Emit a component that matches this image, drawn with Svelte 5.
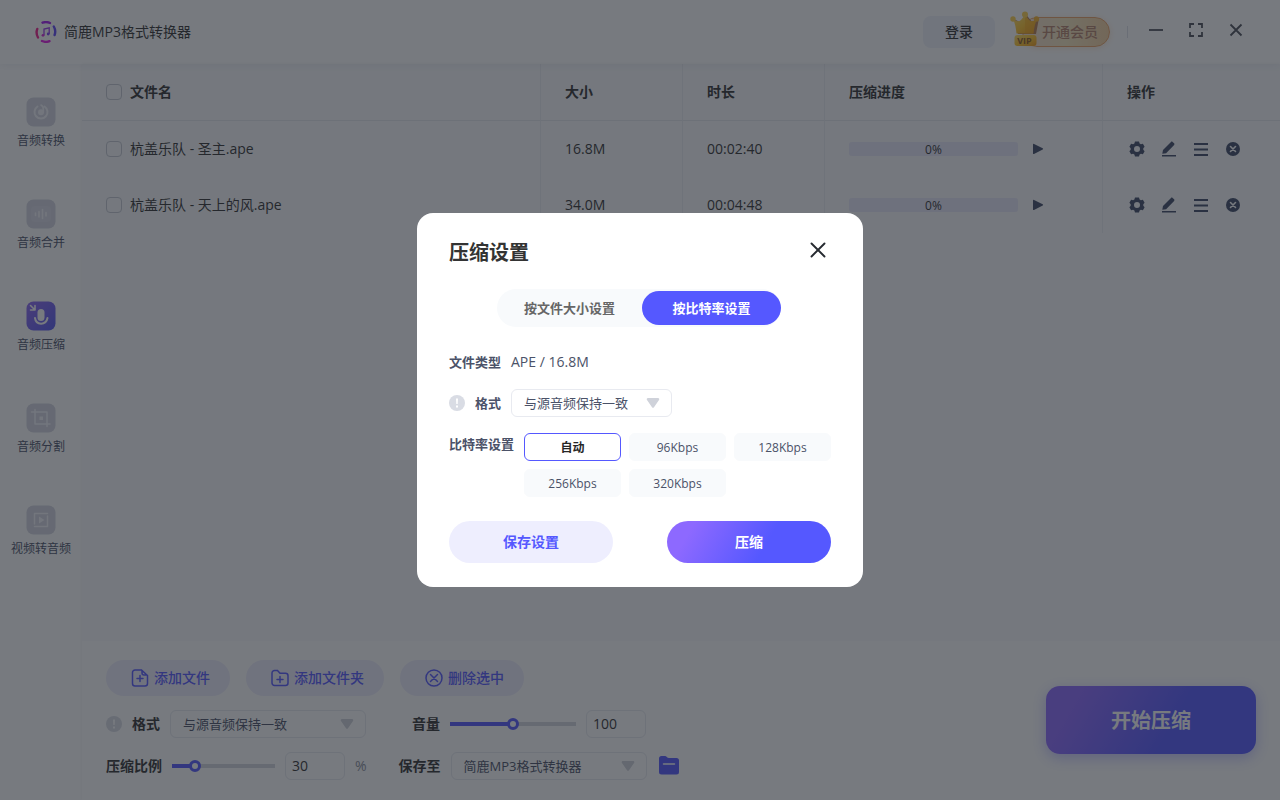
<script>
  const nav = [
    { id: 'convert', label: '音频转换' },
    { id: 'merge', label: '音频合并' },
    { id: 'compress', label: '音频压缩' },
    { id: 'split', label: '音频分割' },
    { id: 'video', label: '视频转音频' }
  ];
  const files = [
    { name: '杭盖乐队 - 圣主.ape', size: '16.8M', time: '00:02:40', progress: 0 },
    { name: '杭盖乐队 - 天上的风.ape', size: '34.0M', time: '00:04:48', progress: 0 }
  ];
  const rates = ['自动', '96Kbps', '128Kbps', '256Kbps', '320Kbps'];

  let active = $state('compress');
  let rate = $state('自动');
  let tab = $state('rate');
  let open = $state(true);
  let ratio = $state(19);
  let volume = $state(50);
</script>

{#snippet caret()}
  <svg class="caret" width="14" height="12" viewBox="0 0 14 12" aria-hidden="true"><path d="M2 1h10c1.200 0 1.700 1.100 1 2L8 10.300c-.5.700-1.500.700-2 0L1 3C.3 2.100.8 1 2 1z" /></svg>
{/snippet}

{#snippet info()}
  <svg class="info" width="16" height="16" viewBox="0 0 16 16" aria-hidden="true"><circle cx="8" cy="8" r="8" /><path d="M7 3.500h2l-.3 5.500H7.300zM7 10.500h2v2H7z" fill="#fff" /></svg>
{/snippet}

<div class="app">
  <header>
    <div class="brand">
      <svg width="22" height="22" viewBox="0 0 22 22" fill="none" aria-hidden="true">
        <g stroke-width="2.400" stroke-linecap="round">
          <path d="M7.500 1.700A10 10 0 0 1 15 2" stroke="#a51cf0" />
          <path d="M18.800 5.500a10 10 0 0 1 .8 8.500" stroke="#5f48f5" />
          <path d="M14.500 20.200a10 10 0 0 1-7.500-.2" stroke="#e01be0" />
          <path d="M3 16.500a10 10 0 0 1-.7-8.600" stroke="#f0208c" />
        </g>
        <path d="M9 14.200V8l5.200-1.200v6.100" stroke="#9a35e8" stroke-width="1.300" />
        <circle cx="8" cy="14.300" r="1.400" fill="#d425d8" /><circle cx="13.200" cy="13" r="1.400" fill="#7a42f0" />
      </svg>
      <span>简鹿MP3格式转换器</span>
    </div>
    <div class="tools">
      <button class="login">登录</button>
      <button class="vip">
        <svg width="32" height="38" viewBox="0 0 32 38" aria-hidden="true">
          <defs>
            <linearGradient id="gold" x1="0" y1="0" x2="1" y2="1"><stop offset="0" stop-color="#ffdf6b" /><stop offset=".5" stop-color="#ffc62e" /><stop offset="1" stop-color="#f29a13" /></linearGradient>
          </defs>
          <path d="M5 8.500 11 12 16.500 4 22 11l7-4-3 16H8z" fill="#b98050" />
          <path d="M3 8c3 2.500 6 3 8 1l4-5 4 5c2 2 5 1.500 8-1-2 4-3 9-3.500 14.500H6.500C6 17 5 12 3 8z" fill="url(#gold)" />
          <path d="M15 4l4 5c2 2 5 1.500 8-1-2 4-3 9-3.500 14.500H15z" fill="#f5a81c" opacity=".5" />
          <circle cx="3" cy="8" r="2.700" fill="#ffd24f" /><circle cx="15" cy="3.500" r="3" fill="#ffd24f" /><circle cx="26.500" cy="8" r="2.700" fill="#f8b42f" />
          <rect x="4.500" y="24" width="22" height="11" rx="3" fill="url(#gold)" />
          <text x="14.500" y="33" text-anchor="middle" class="viptext">VIP</text>
        </svg>
        <span>开通会员</span>
      </button>
      <i class="rule"></i>
      <div class="wins">
        <button aria-label="最小化"><svg width="16" height="16" viewBox="0 0 16 16"><path d="M1 8h14" /></svg></button>
        <button aria-label="全屏"><svg width="16" height="16" viewBox="0 0 16 16"><path d="M2 6V2h4M10 2h4v4M14 10v4h-4M6 14H2v-4" /></svg></button>
        <button aria-label="关闭"><svg width="16" height="16" viewBox="0 0 16 16"><path d="M2.500 2.500l11 11M13.500 2.500l-11 11" /></svg></button>
      </div>
    </div>
  </header>

  <div class="body">
    <nav>
      {#each nav as item}
        <button class:on={active === item.id} onclick={() => (active = item.id)}>
          <svg width="30" height="30" viewBox="0 0 30 30" fill="none" stroke-linecap="round" stroke-linejoin="round" aria-hidden="true">
            <defs><linearGradient id="violet" x1="0" y1="0" x2="1" y2="1"><stop offset="0" stop-color="#8f68f2" /><stop offset="1" stop-color="#5558ef" /></linearGradient></defs>
            <rect x=".5" y=".5" width="29" height="29" rx="7" fill={active === item.id ? 'url(#violet)' : '#d4d5e0'} />
            {#if item.id === 'convert'}
              <path d="M11.500 9.500a6.500 6.500 0 1 0 7 0" stroke="#f4f5fa" stroke-width="2" /><path d="M15 8c2 1 2.500 2.500 2.300 4.500v3" stroke="#f4f5fa" stroke-width="1.600" /><circle cx="15" cy="15.300" r="3" fill="#f4f5fa" />
            {:else if item.id === 'merge'}
              <rect x="5" y="7" width="20" height="16" rx="4" fill="#d9dae5" />
              <path d="M9.500 14v2.500M13 12.500v5.500M16.500 10.500v9M20 13.500v3.500" stroke="#f4f5fa" stroke-width="1.600" />
            {:else if item.id === 'compress'}
              <rect x="11.500" y="8" width="7" height="12" rx="3.500" fill="#fff" />
              <path d="M9 17c1 7.500 11 7.500 12.500 0" stroke="#fff" stroke-width="2" />
              <path d="M4.500 4.500l4 4M9 4.500v4.500H4.500" stroke="#fff" stroke-width="1.600" />
            {:else if item.id === 'split'}
              <path d="M5.500 9H21v14.500M9 6.500V21h15" stroke="#f4f5fa" stroke-width="1.500" /><rect x="13.500" y="13.500" width="3.500" height="3.500" fill="#f4f5fa" />
            {:else}
              <path d="M21.500 8.500H8.500V19M8.500 21.500h13V11" stroke="#f4f5fa" stroke-width="1.500" /><path d="M13 11.500l5.500 3.500-5.500 3.500z" fill="#f4f5fa" />
            {/if}
          </svg>
          <span>{item.label}</span>
        </button>
      {/each}
    </nav>

    <main>
      <div class="list">
        <table>
          <thead>
            <tr>
              <th><label><input type="checkbox" />文件名</label></th>
              <th class="c-size">大小</th>
              <th class="c-size">时长</th>
              <th class="c-prog">压缩进度</th>
              <th class="c-act">操作</th>
            </tr>
          </thead>
          <tbody>
            {#each files as f}
              <tr>
                <td><label><input type="checkbox" />{f.name}</label></td>
                <td>{f.size}</td>
                <td>{f.time}</td>
                <td>
                  <div class="prog">
                    <div class="bar"><div class="fill" style="width:{f.progress}%"></div><span>{f.progress}%</span></div>
                    <button aria-label="开始"><svg width="12" height="12" viewBox="0 0 12 12"><path d="M1 1.500c0-.6.500-.8 1-.6l8.700 4.400c.5.300.5 1 0 1.300L2 11c-.5.300-1 0-1-.5z" fill="#3f4a66" /></svg></button>
                  </div>
                </td>
                <td>
                  <div class="acts">
                    <button aria-label="设置"><svg width="16" height="16" viewBox="0 0 16 16"><path fill="#3f4a66" fill-rule="evenodd" d="M6 .5h4l.6 2 1.300.7 2-.5 1.700 3L14.300 7.200v1.600l1.300 1.500-1.700 3-2-.5-1.300.7-.6 2H6l-.6-2-1.300-.7-2 .5-1.700-3 1.300-1.500V7.200L.4 5.700l1.700-3 2 .5 1.300-.7zM8 5a3 3 0 1 0 0 6 3 3 0 0 0 0-6z" /></svg></button>
                    <button aria-label="编辑"><svg width="16" height="16" viewBox="0 0 16 16" fill="#3f4a66"><path d="M10 .9c.5-.5 1.100-.5 1.600 0l1.500 1.400c.5.500.5 1.100 0 1.600l-8 8.300L1.300 12.800 2 9zM1 14h14v1.600H1z" /></svg></button>
                    <button aria-label="详情"><svg width="16" height="16" viewBox="0 0 16 16" fill="none" stroke="#3f4a66" stroke-width="1.800"><path d="M1 3h14M1 8.500h14M1 14h14" /></svg></button>
                    <button aria-label="删除"><svg width="16" height="16" viewBox="0 0 16 16"><circle cx="8" cy="8" r="7" fill="#3f4a66" /><path d="M5.500 5.500l5 5M10.500 5.500l-5 5" stroke="#fff" stroke-width="1.600" stroke-linecap="round" /></svg></button>
                  </div>
                </td>
              </tr>
            {/each}
          </tbody>
        </table>
      </div>

      <footer>
        <div class="controls">
          <div class="adds">
            <button><svg width="18" height="18" viewBox="0 0 18 18"><path d="M10.500 1H4a2.500 2.500 0 0 0-2.500 2.500v11A2.500 2.500 0 0 0 4 17h10a2.500 2.500 0 0 0 2.500-2.500V6.500zM11 1.500V4a2 2 0 0 0 2 2h3M9 6.500v6M6 9.500h6" /></svg>添加文件</button>
            <button><svg width="18" height="18" viewBox="0 0 18 18"><path d="M1 4a2.500 2.500 0 0 1 2.500-2.500h3L9 4.300h5.500A2.500 2.500 0 0 1 17 6.800V14a2.500 2.500 0 0 1-2.500 2.500h-11A2.500 2.500 0 0 1 1 14zM9 7.500v6M6 10.500h6" /></svg>添加文件夹</button>
            <button><svg width="18" height="18" viewBox="0 0 18 18"><circle cx="9" cy="9" r="8" /><path d="M5.500 5.500l7 7M12.500 5.500l-7 7" /></svg>删除选中</button>
          </div>
          <div class="line">
            {@render info()}
            <label class="lead" for="fmt">格式</label>
            <span class="select wide"><select id="fmt"><option>与源音频保持一致</option></select>{@render caret()}</span>
            <label class="vol" for="vol">音量</label>
            <input class="range long" id="vol" type="range" bind:value={volume} style="--p:{volume}%" />
            <input class="num" type="text" value="100" aria-label="音量数值" />
          </div>
          <div class="line">
            <label for="ratio">压缩比例</label>
            <input class="range" id="ratio" type="range" bind:value={ratio} style="--p:{ratio}%" />
            <input class="num" type="text" value="30" aria-label="压缩比例数值" />
            <span class="pct">%</span>
            <label class="save" for="dest">保存至</label>
            <span class="select wide"><select id="dest"><option>简鹿MP3格式转换器</option></select>{@render caret()}</span>
            <button class="folder" aria-label="打开文件夹"><svg width="20" height="20" viewBox="0 0 20 20"><path d="M0 2.500A2.500 2.500 0 0 1 2.500 0H6c1.500 0 2 2 4 2h7.500A2.500 2.500 0 0 1 20 4.500V16a2.500 2.500 0 0 1-2.500 2.500h-15A2.500 2.500 0 0 1 0 16z" fill="#5558ff" /><path d="M4.500 8h11" stroke="#fff" stroke-width="1.500" stroke-linecap="round" /></svg></button>
          </div>
        </div>
        <button class="start">开始压缩</button>
      </footer>
    </main>
  </div>
</div>

{#if open}
  <div class="mask">
    <div class="dialog" role="dialog" aria-modal="true" aria-labelledby="dlg-title">
      <div class="top">
        <h2 id="dlg-title">压缩设置</h2>
        <button class="close" aria-label="关闭" onclick={() => (open = false)}><svg width="16" height="16" viewBox="0 0 16 16"><path d="M1.500 1.500l13 13M14.500 1.500l-13 13" stroke="#262a30" stroke-width="1.900" stroke-linecap="round" /></svg></button>
      </div>
      <div class="tabs">
        <button class:on={tab === 'size'} onclick={() => (tab = 'size')}>按文件大小设置</button>
        <button class:on={tab === 'rate'} onclick={() => (tab = 'rate')}>按比特率设置</button>
      </div>
      <div class="field"><b>文件类型</b><span class="kind">APE / 16.8M</span></div>
      <div class="field fmt">
        {@render info()}
        <label for="dfmt">格式</label>
        <span class="select"><select id="dfmt"><option>与源音频保持一致</option></select>{@render caret()}</span>
      </div>
      <div class="field rate">
        <b>比特率设置</b>
        <div class="rates">
          {#each rates as r}
            <button class:on={rate === r} onclick={() => (rate = r)}>{r}</button>
          {/each}
        </div>
      </div>
      <div class="ends">
        <button class="keep">保存设置</button>
        <button class="go">压缩</button>
      </div>
    </div>
  </div>
{/if}

<style>
  :global(body) { margin: 0; }
  .app, .mask, .app *, .mask * { box-sizing: border-box; }
  .app, .mask { font-family: "Open Sans", "Noto Sans CJK SC", sans-serif; font-size: 14px; line-height: 20px; color: #333; }
  button, input, select { font: inherit; color: inherit; border: 0; margin: 0; padding: 0; background: none; }
  svg { display: block; flex: none; }

  .app { display: flex; flex-direction: column; min-height: 100vh; background: #fff; }
  header { display: flex; align-items: center; justify-content: space-between; height: 64px; padding: 0 36px 0 35px; box-shadow: 0 0 8px rgba(60, 70, 120, .1); position: relative; }
  .brand { display: flex; align-items: center; gap: 7px; }
  .tools { display: flex; align-items: center; }
  .login { width: 72px; height: 32px; border-radius: 8px; background: #f0f3fb; font-weight: 500; }
  .vip { display: flex; align-items: center; width: 88px; height: 30px; margin-left: 27px; border: 1px solid #eba468; border-radius: 15px; background: linear-gradient(90deg, #f5dccb, #f6e6bd 50%, #f3cf9f); color: #b5836b; font-weight: 500; box-shadow: 0 1px 6px rgba(240, 190, 130, .35); }
  .vip svg { margin: -4px 0 0 -13px; }
  .viptext { font: 700 9px "Open Sans", sans-serif; fill: #8d5a28; }
  .vip span { white-space: nowrap; }
  .rule { width: 1px; height: 12px; margin: 0 20px 0 17px; background: #dfe2e8; }
  .wins { display: flex; gap: 24px; padding-bottom: 4px; }
  .wins path { fill: none; stroke: #4b4f58; stroke-width: 1.800; }

  .body { display: flex; flex: 1; }
  nav { display: flex; flex-direction: column; gap: 48px; width: 82px; padding-top: 33px; flex: none; }
  nav button { display: flex; flex-direction: column; align-items: center; gap: 4px; font-size: 12px; line-height: 20px; color: #4b5268; white-space: nowrap; }
  main { display: flex; flex-direction: column; flex: 1; min-width: 0; box-shadow: 0 0 3px rgba(60, 70, 100, .08); }
  .list { flex: 1; background: #f9fafc; }
  table { width: 100%; table-layout: fixed; border-collapse: separate; border-spacing: 0; }
  th, td { height: 56px; padding: 0 0 0 24px; text-align: left; border-right: 1px solid #eceef2; }
  th:last-child, td:last-child { border-right: 0; }
  th { height: 57px; font-weight: 700; border-bottom: 1px solid #e6e8ee; }
  .c-size { width: 142px; }
  .c-prog { width: 278px; }
  .c-act { width: 177px; }
  td label, th label { display: flex; align-items: center; gap: 8px; }
  input[type='checkbox'] { appearance: none; width: 16px; height: 16px; border: 1px solid #c6c9d2; border-radius: 4px; }
  .prog, .acts { display: flex; align-items: center; gap: 14px; }
  .bar { display: grid; align-items: center; width: 169px; height: 14px; border-radius: 3px; background: #e8e8fb; font-size: 12px; text-align: center; }
  .bar > * { grid-area: 1 / 1; }
  .bar span { line-height: 16px; }
  .fill { height: 14px; border-radius: 3px; background: #5558ff; }
  .acts { gap: 16px; padding-left: 2px; }

  footer { display: flex; align-items: center; justify-content: space-between; gap: 24px; padding: 19px 24px 20px; background: #fff; }
  .controls { display: flex; flex-direction: column; gap: 14px; }
  .adds { display: flex; gap: 16px; }
  .adds button { display: flex; align-items: center; gap: 5px; height: 36px; padding: 0 20px 0 25px; border-radius: 18px; background: #eeedfd; color: #5558ff; font-weight: 500; }
  .adds svg { fill: none; stroke: #5558ff; stroke-width: 1.500; stroke-linecap: round; }
  .line { display: flex; align-items: center; height: 28px; }
  .line label { font-weight: 700; white-space: nowrap; }
  .line .lead { margin: 0 10px; }
  .line .vol { margin: 0 10px 0 46px; }
  .line .save { margin: 0 10px 0 32px; }
  .info { fill: #d9dce4; }
  .select { display: grid; align-items: center; width: 161px; }
  .select > :global(*) { grid-area: 1 / 1; }
  .wide { width: 196px; }
  select { appearance: none; width: 100%; height: 28px; padding: 0 30px 0 12px; border: 1px solid #e8eaf0; border-radius: 6px; color: #4b5268; font-size: 13px; }
  .caret { justify-self: end; margin-right: 12px; fill: #cfd2da; pointer-events: none; }
  .range { appearance: none; width: 103px; height: 12px; background: linear-gradient(90deg, #5558ff var(--p), #d5d8de var(--p)) center / 100% 4px no-repeat; border-radius: 2px; }
  .line .range { margin-left: 10px; }
  .line .long { width: 126px; margin-left: 0; }
  .range::-webkit-slider-thumb { appearance: none; box-sizing: border-box; width: 12px; height: 12px; border: 3px solid #5558ff; border-radius: 50%; background: #fff; }
  .num { width: 60px; height: 28px; margin-left: 10px; padding: 0 6px 2px; border: 1px solid #e8eaf0; border-radius: 6px; }
  .pct { margin-left: 10px; color: #8b909c; }
  .folder { margin-left: 12px; }
  .start { width: 210px; height: 68px; padding-top: 2px; border-radius: 14px; color: #fff; font-size: 20px; font-weight: 700; background: linear-gradient(120deg, #8d69ff 15%, #5558ff 60%); box-shadow: 0 4px 14px rgba(85, 88, 255, .35); }

  .mask { position: fixed; inset: 0; display: flex; align-items: center; justify-content: center; background: rgba(29, 33, 41, .6); }
  .dialog { width: 446px; padding: 24px 32px; border-radius: 16px; background: #fff; color: #4b5268; font-size: 13px; }
  .top { display: flex; align-items: center; justify-content: space-between; height: 30px; }
  h2 { margin: 0; padding-top: 2px; font-size: 20px; line-height: 30px; color: #333; }
  .close { margin-right: 5px; padding-bottom: 4px; }
  .tabs { display: flex; align-items: center; width: 284px; height: 38px; margin: 22px 50px 0 48px; border-radius: 19px; background: #f8fafc; }
  .tabs button { flex: 1; height: 34px; border-radius: 17px; font-weight: 700; color: #666; }
  .tabs .on { background: #5558ff; color: #fff; flex: 0 0 139px; }
  .field { display: flex; align-items: center; gap: 10px; }
  .field b, .field label { font-weight: 700; white-space: nowrap; }
  .tabs + .field { margin-top: 25px; }
  .kind { font-size: 14px; }
  .fmt { margin-top: 17px; }
  .rate { align-items: flex-start; margin-top: 16px; }
  .rate b { line-height: 22px; }
  .rates { display: grid; flex: 1; grid-template-columns: repeat(3, 1fr); gap: 8px; }
  .rates button { height: 28px; padding-top: 1px; border: 1px solid #f8fafc; border-radius: 6px; background: #f8fafc; font-size: 12px; }
  .rates .on { border-color: #5558ff; background: #fff; color: #262626; font-weight: 700; }
  .ends { display: flex; justify-content: space-between; margin-top: 24px; }
  .ends button { width: 164px; height: 42px; border-radius: 21px; font-size: 14px; font-weight: 700; }
  .keep { background: #eeeefe; color: #5558ff; }
  .go { background: linear-gradient(120deg, #8d69ff 15%, #5558ff 60%); color: #fff; }
</style>
